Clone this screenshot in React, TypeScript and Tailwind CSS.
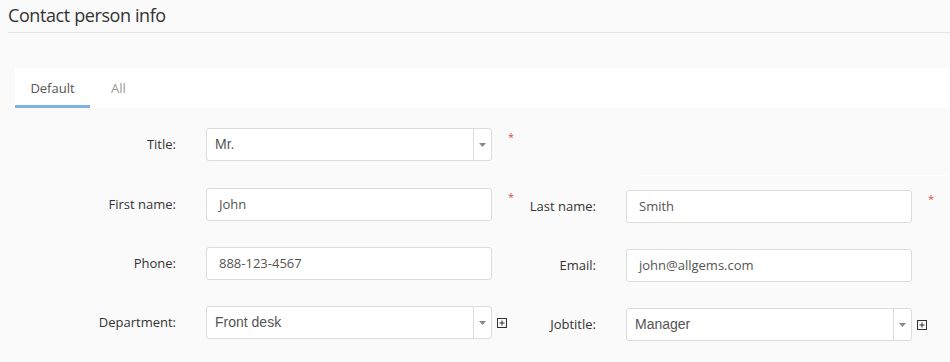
import { ReactNode } from "react";

const FONT = "font-['Open_Sans','Noto_Sans',sans-serif]";

const Asterisk = () => (
  <span className="mt-[3px] ml-[16px] text-[11px] leading-none text-[#d9534f]">*</span>
);

const PlusBox = () => (
  <svg width="10" height="10" viewBox="0 0 10 10" className="ml-[5px] shrink-0 text-[#333]">
    <rect x="0.5" y="0.5" width="9" height="9" fill="none" stroke="currentColor" />
    <path d="M5 2.5v5M2.5 5h5" stroke="currentColor" />
  </svg>
);

const TextInput = ({ value }: { value: string }) => (
  <div className="flex h-[33px] w-[286px] items-center rounded-[3px] border border-[#dcdcdc] bg-white pl-[12px] text-[13px] text-[#555]">
    {value}
  </div>
);

const SelectInput = ({ value }: { value: string }) => (
  <div className="flex h-[33px] w-[286px] items-stretch rounded-[3px] border border-[#dcdcdc] bg-white">
    <div className="flex flex-1 items-center pl-[8px] font-['Liberation_Sans',Arial,sans-serif] text-[14px] text-[#555]">
      {value}
    </div>
    <div className="flex w-[18px] items-center justify-center border-l border-[#dcdcdc]">
      <svg width="7" height="4" viewBox="0 0 7 4">
        <path d="M0 0h7L3.5 4z" fill="#888" />
      </svg>
    </div>
  </div>
);

type Field = {
  label: string;
  control: ReactNode;
  addon?: "required" | "plus";
};

// asterisk sits near the top of the field, the plus box is centred on it
const Addon = ({ kind }: { kind?: Field["addon"] }) => {
  if (kind === "required") return <Asterisk />;
  if (kind === "plus")
    return (
      <div className="flex h-[33px] items-center">
        <PlusBox />
      </div>
    );
  return null;
};

const Row = ({ left, right }: { left: Field; right?: Field }) => (
  <div className="flex items-start">
    <div className="flex h-[33px] items-center">
      <label className="w-[176px] text-right text-[13px] text-[#333]">{left.label}</label>
      <div className="ml-[30px]">{left.control}</div>
    </div>
    <div className="flex h-[33px] w-[34px] items-start">
      <Addon kind={left.addon} />
    </div>
    {right && (
      <div className="mt-[2px] flex items-start">
        <div className="flex h-[33px] items-center">
          <label className="w-[70px] text-right text-[13px] text-[#333]">{right.label}</label>
          <div className="ml-[30px]">{right.control}</div>
        </div>
        <Addon kind={right.addon} />
      </div>
    )}
  </div>
);

export default function App() {
  return (
    <div className={`min-h-screen bg-[#fafafa] ${FONT}`}>
      <div className="ml-2 h-[33px] border-b border-[#e6e6e6] pt-[1px]">
        <h2 className="text-[18px] leading-[28px] tracking-[-0.4px] text-[#333]">Contact person info</h2>
      </div>

      <div className="ml-[15px] mt-[35px] flex h-[40px] bg-white">
        <button className="flex w-[75px] items-center justify-center border-b-[3px] border-[#7eb3e3] pt-[4px] text-[13px] text-[#555]">
          Default
        </button>
        <button className="flex w-[57px] items-center justify-center border-b-[3px] border-transparent pt-[4px] text-[13px] text-[#999]">
          All
        </button>
      </div>

      <div className="mt-[20px] flex flex-col">
        <Row left={{ label: "Title:", control: <SelectInput value="Mr." />, addon: "required" }} />
        <div className="ml-[638px] mt-[14px] h-px w-[309px] bg-white" />
        <div className="mt-[12px]">
          <Row
            left={{ label: "First name:", control: <TextInput value="John" />, addon: "required" }}
            right={{ label: "Last name:", control: <TextInput value="Smith" />, addon: "required" }}
          />
        </div>
        <div className="mt-[24px]">
          <Row
            left={{ label: "Phone:", control: <TextInput value="888-123-4567" /> }}
            right={{ label: "Email:", control: <TextInput value="john@allgems.com" /> }}
          />
        </div>
        <div className="mt-[24px]">
          <Row
            left={{ label: "Department:", control: <SelectInput value="Front desk" />, addon: "plus" }}
            right={{ label: "Jobtitle:", control: <SelectInput value="Manager" />, addon: "plus" }}
          />
        </div>
      </div>
    </div>
  );
}
